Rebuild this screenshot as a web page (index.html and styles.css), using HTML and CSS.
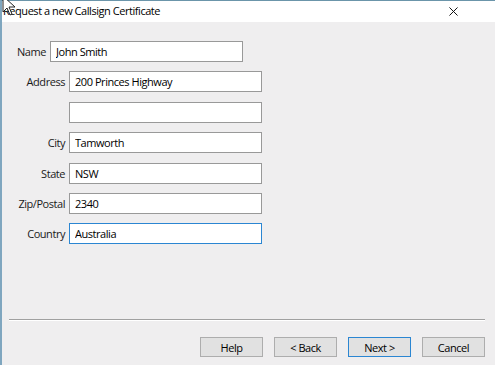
FILE: index.html
```html
<!DOCTYPE html>
<html lang="en">
<head>
    <meta charset="UTF-8">
    <title>Request a new Callsign Certificate</title>
    <link rel="stylesheet" href="styles.css">
</head>
<body>
    <div class="window">
        <div class="titlebar">
            <span class="titlebar__text">Request a new Callsign Certificate</span>
            <svg class="titlebar__close" viewBox="0 0 10 10"><path d="M0.5 0.5L9.5 9.5M9.5 0.5L0.5 9.5"/></svg>
        </div>
        <div class="content">
            <form class="form">
                <div class="row row_name">
                    <label class="row__label">Name</label>
                    <input class="row__input" type="text" value="John Smith">
                </div>
                <div class="row">
                    <label class="row__label">Address</label>
                    <input class="row__input" type="text" value="200 Princes Highway">
                </div>
                <div class="row">
                    <label class="row__label"></label>
                    <input class="row__input" type="text" value="">
                </div>
                <div class="row">
                    <label class="row__label">City</label>
                    <input class="row__input" type="text" value="Tamworth">
                </div>
                <div class="row">
                    <label class="row__label">State</label>
                    <input class="row__input" type="text" value="NSW">
                </div>
                <div class="row">
                    <label class="row__label">Zip/Postal</label>
                    <input class="row__input" type="text" value="2340">
                </div>
                <div class="row">
                    <label class="row__label">Country</label>
                    <input class="row__input row__input_focus" type="text" value="Australia">
                </div>
            </form>
            <div class="separator"></div>
            <div class="buttons">
                <button type="button" class="btn">Help</button>
                <button type="button" class="btn">&lt; Back</button>
                <button type="button" class="btn btn_default">Next &gt;</button>
                <button type="button" class="btn">Cancel</button>
            </div>
        </div>
    </div>
    <svg class="cursor" viewBox="0 0 14 22"><path d="M1 1V17L5 13L8 20L10 19L7 12H13Z"/></svg>
</body>
</html>
```

FILE: styles.css
```css
body {
    margin: 0;
    background-color: #ffffff;
    font-family: "Open Sans", "Noto Sans", sans-serif;
    font-size: 11px;
    letter-spacing: -0.45px;
    color: #000;
}
.window {
    width: 493px;
    height: 364px;
    border-top: 1px solid #6b95aa;
    border-left: 2px solid #7fa6bf;
    display: flex;
    flex-direction: column;
}
.titlebar {
    height: 21px;
    background-color: #ffffff;
    display: flex;
    align-items: center;
    justify-content: space-between;
    padding: 0 37px 0 1px;
}
.titlebar__text {
    margin-top: -2px;
}
.titlebar__close {
    width: 9px;
    height: 9px;
    fill: none;
    stroke: #111;
    stroke-width: 1.1;
}
.content {
    flex: 1;
    background-color: #efeeef;
    padding-top: 19px;
    display: flex;
    flex-direction: column;
}
.form {
    display: flex;
    flex-direction: column;
    gap: 9.4px;
}
.row {
    display: flex;
    align-items: center;
    gap: 4px;
    height: 21px;
}
.row__label {
    width: 63px;
    text-align: right;
    color: #1a1a1a;
}
.row_name .row__label {
    width: 44px;
}
.row__input {
    width: 193px;
    height: 21px;
    box-sizing: border-box;
    margin: 0;
    padding: 0 5px;
    border: 1px solid #999999;
    background-color: #fff;
    font-family: inherit;
    font-size: 11px;
    letter-spacing: inherit;
    color: #000;
    outline: none;
}
.row__input_focus {
    border-color: #2b86d2;
}
.separator {
    margin: 75px 10px 0 7px;
    border-top: 1px solid #a0a0a0;
    border-bottom: 1px solid #ffffff;
}
.buttons {
    display: flex;
    justify-content: flex-end;
    gap: 11px;
    margin-top: 16px;
    padding-right: 10px;
}
.btn {
    width: 63px;
    height: 20px;
    box-sizing: border-box;
    border: 1px solid #adadad;
    background-color: #e1e1e1;
    font-family: inherit;
    font-size: 11px;
    letter-spacing: inherit;
    color: #000;
    padding: 0;
}
.btn_default {
    border-color: #2b86d2;
}
.cursor {
    position: absolute;
    left: 2px;
    top: -5px;
    width: 14px;
    height: 22px;
    fill: #fff;
    stroke: #222;
    stroke-width: 1;
}
```
